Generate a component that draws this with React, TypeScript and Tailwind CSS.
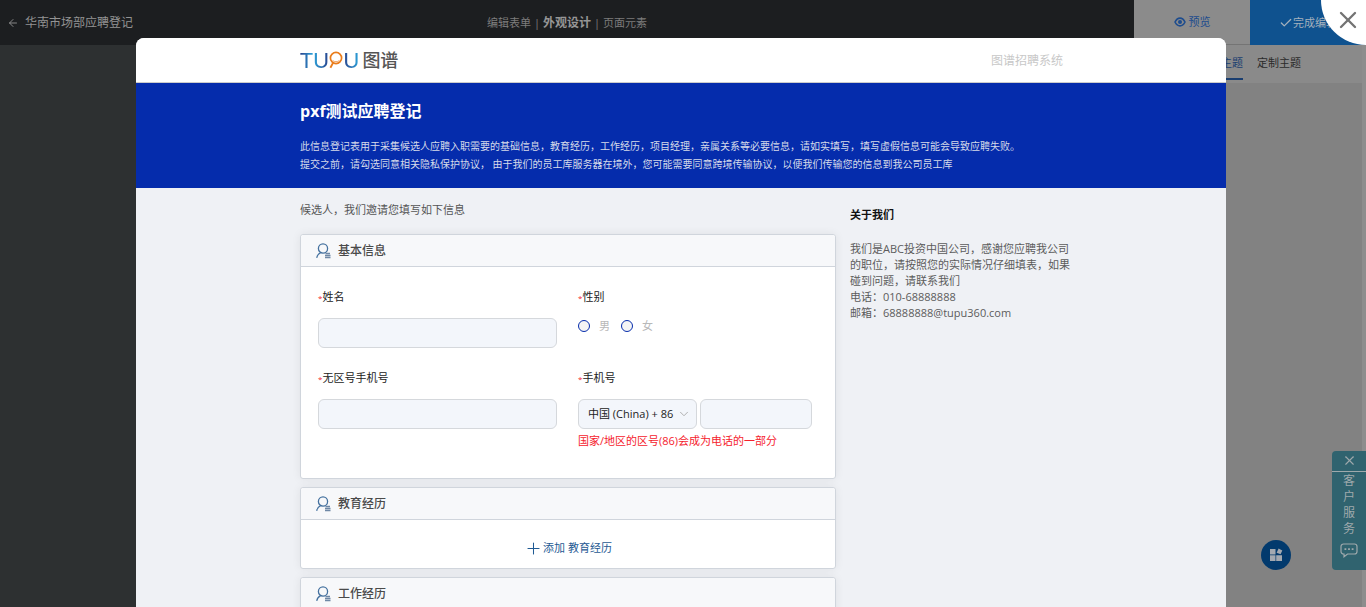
import React, { useState } from 'react';
import { Check, X, ArrowLeft, ChevronDown, Plus } from 'lucide-react';

const inputClass =
  'h-[30px] rounded-md border border-[#d5d8dc] bg-[#f3f6fb] px-2 text-[11px] text-[#333] outline-none focus:border-[#052cac]';

function SectionIcon() {
  return (
    <svg width="15" height="16" viewBox="0 0 15 16" fill="none" className="shrink-0">
      <circle cx="7" cy="5.5" r="4.6" stroke="#44719f" strokeWidth="1.3" />
      <path d="M4.6 9.6C2.6 10.6 1.2 12.2.7 14.8" stroke="#44719f" strokeWidth="1.2" />
      <path d="M9.5 10.5h4.5M9 12.5h5.5M9 14.5h5.5" stroke="#6f88a6" strokeWidth="1.3" />
    </svg>
  );
}

function EyeIcon() {
  return (
    <svg width="12" height="10" viewBox="0 0 12 10" fill="none">
      <path d="M1 5c1.3-2.6 3-3.9 5-3.9S9.7 2.4 11 5c-1.3 2.6-3 3.9-5 3.9S2.3 7.6 1 5z" stroke="currentColor" strokeWidth="1.6" />
      <circle cx="6" cy="5" r="2" fill="currentColor" />
    </svg>
  );
}

function Logo() {
  return (
    <div className="flex items-center font-['Lato','Noto_Sans_CJK_SC',sans-serif] text-[22px] leading-6">
      <span className="bg-linear-to-r from-[#27408b] to-[#2aa5dc] bg-clip-text text-transparent">T</span>
      <span className="bg-linear-to-r from-[#2aa5dc] to-[#27408b] bg-clip-text text-transparent">U</span>
      <svg width="14" height="18" viewBox="0 0 14 18" fill="none">
        <circle cx="7" cy="7" r="5.6" stroke="#ea7d1c" strokeWidth="1.7" />
        <path d="M4.2 11.6 1.4 16.8" stroke="#ea7d1c" strokeWidth="1.9" />
        <path d="M3.6 9.5c2 1.6 4.8 1.6 6.8 0" stroke="#f0a260" strokeWidth="1" />
      </svg>
      <span className="bg-linear-to-r from-[#27408b] to-[#2aa5dc] bg-clip-text text-transparent">U</span>
      <span className="ml-[3px] text-[18px] font-medium text-[#555]">图谱</span>
    </div>
  );
}

function Section({ title, children }: { title: string; children?: React.ReactNode }) {
  return (
    <section className="rounded-[3px] border border-[#d0d5dc] bg-white shadow-[0_0_10px_rgba(0,0,0,0.07)]">
      <h2 className="flex h-8 items-center gap-[7px] rounded-t-[3px] border-b border-[#d0d5dc] bg-[#f7f8fa] pl-[15px] text-[12px] font-medium text-[#4a4a4a]">
        <SectionIcon />
        {title}
      </h2>
      {children}
    </section>
  );
}

function Required() {
  return <span className="text-[8px] leading-none text-[#f5222d]">*</span>;
}

export default function App() {
  const [gender, setGender] = useState('');

  return (
    <div className="relative flex h-screen flex-col overflow-hidden bg-[#848484] font-['Open_Sans','Noto_Sans_CJK_SC',sans-serif] text-[11px] leading-[18px]">
      {/* editor behind the preview */}
      <header className="flex h-[45px] shrink-0">
        <div className="grid flex-1 grid-cols-[1fr_auto_1fr] items-center bg-[#1c1e20] text-[#7c7c7c]">
          <a href="#" className="flex items-center gap-[6px] pl-[7px] text-[12px] text-[#939393]">
            <ArrowLeft size={12} strokeWidth={1.8} />
            华南市场部应聘登记
          </a>
          <nav className="flex items-center gap-[3px]">
            <a href="#">编辑表单</a>
            <span>|</span>
            <a href="#" className="text-[12px] font-bold text-[#969696]">外观设计</a>
            <span>|</span>
            <a href="#">页面元素</a>
          </nav>
        </div>
        <button className="flex w-[116px] items-center justify-center gap-[3px] border-b border-[#747474] bg-[#8b8b8b] text-[#1d4c8e]">
          <EyeIcon />
          预览
        </button>
        <button className="flex w-[116px] items-center bg-[#0f528f] pl-[29px] text-[#a5b1bd]">
          <Check size={14} strokeWidth={2.2} />
          完成编辑
        </button>
      </header>

      <div className="flex flex-1">
        <div className="flex-1 bg-[#2d3031]" />
        <aside className="w-[232px] border-r-4 border-[#8d8d8d] bg-[#828282]">
          <div className="flex h-[38px] gap-[14px] bg-[#8a8a8a] pl-[65px] text-[#2b2b2b]">
            <a href="#" className="mb-[3px] border-b-2 border-[#1a3e70] pt-[9px] text-[#1a3e70]">系统主题</a>
            <a href="#" className="pt-[9px]">定制主题</a>
          </div>
        </aside>
      </div>

      <button aria-label="菜单" className="absolute right-[75px] bottom-[37px] flex size-[30px] items-center justify-center rounded-full bg-[#023a6d]">
        <svg width="14" height="14" viewBox="0 0 14 14" fill="#a3a9b0">
          <path d="M1 1h5.5v5.5H1zM1 7.2h5.5V13H1zM7.2 7.2H13V13H7.2z" />
          <path d="M9.6.6 13.3 2.4 11.6 6.3 7.6 4.7z" />
        </svg>
      </button>

      <div className="absolute right-0 bottom-[37px] flex h-[119px] w-[34px] flex-col items-center rounded-l bg-[#30636f] text-[#9fa9ac]">
        <button aria-label="关闭客服" className="flex h-[21px] w-full items-start justify-center border-b border-[#9fa9ac] pt-[2px]">
          <X size={15} strokeWidth={1.8} />
        </button>
        <a href="#" className="flex flex-col items-center pt-px text-[12px] leading-4">
          <span className="w-3">客户服务</span>
          <svg width="18" height="15" viewBox="0 0 18 15" fill="none" className="mt-[6px]">
            <path d="M3.5 1h11A2.5 2.5 0 0 1 17 3.5v5a2.5 2.5 0 0 1-2.5 2.5H7.5L4 13.8V11h-.5A2.5 2.5 0 0 1 1 8.5v-5A2.5 2.5 0 0 1 3.5 1z" stroke="currentColor" strokeWidth="1.2" />
            <path d="M4.5 5.2h1.8V7H4.5zM8.1 5.2h1.8V7H8.1zM11.7 5.2h1.8V7h-1.8z" fill="currentColor" />
          </svg>
        </a>
      </div>

      <button aria-label="关闭" className="absolute top-0 right-0 flex size-[45px] items-start justify-end rounded-bl-full bg-white pt-[6px] pr-1 text-[#737373]">
        <X size={28} strokeWidth={2} />
      </button>

      {/* preview window */}
      <div className="absolute top-[38px] right-[140px] bottom-0 left-[136px] overflow-hidden rounded-t-lg bg-[#eff1f5]">
        <div className="flex h-[45px] items-center justify-between border-b border-[#ccc] bg-white pr-[163px] pl-[164px]">
          <Logo />
          <span className="pt-[2px] text-[12px] text-[#c8c8c8]">图谱招聘系统</span>
        </div>

        <div className="bg-[#052cac] pt-4 pr-[160px] pb-[15px] pl-[164px]">
          <h1 className="text-[16px] leading-6 font-bold text-white">pxf测试应聘登记</h1>
          <p className="mt-[14px] text-[10px] text-[#d6dbea]">
            此信息登记表用于采集候选人应聘入职需要的基础信息，教育经历，工作经历，项目经理，亲属关系等必要信息，请如实填写，填写虚假信息可能会导致应聘失败。
            <br />
            提交之前，请勾选同意相关隐私保护协议， 由于我们的员工库服务器在境外，您可能需要同意跨境传输协议，以便我们传输您的信息到我公司员工库
          </p>
        </div>

        <div className="flex gap-[14px] pr-[160px] pl-[164px]">
          <form className="flex-1 pt-[13px]">
            <p className="mb-[15px] text-[#555]">候选人，我们邀请您填写如下信息</p>
            <div className="flex flex-col gap-2">
              <Section title="基本信息">
                <div className="grid grid-cols-2 gap-[21px] pt-[21px] pr-[18px] pb-[28px] pl-[17px] text-[#222]">
                  <div className="flex flex-col gap-3">
                    <label htmlFor="name"><Required />姓名</label>
                    <input id="name" className={inputClass} />
                  </div>

                  <fieldset>
                    <legend><Required />性别</legend>
                    <div className="mt-[11px] flex gap-[11px] text-[#b8b8b8]">
                      {['男', '女'].map((item) => (
                        <label key={item} className="flex items-center gap-[9px]">
                          <input
                            type="radio"
                            name="gender"
                            value={item}
                            checked={gender === item}
                            onChange={() => setGender(item)}
                            className="size-3 appearance-none rounded-full border border-[#052cac] bg-[#f5f5f5] checked:bg-[#052cac]"
                          />
                          {item}
                        </label>
                      ))}
                    </div>
                  </fieldset>

                  <div className="flex flex-col gap-3">
                    <label htmlFor="phone"><Required />无区号手机号</label>
                    <input id="phone" type="tel" className={inputClass} />
                  </div>

                  <div>
                    <label htmlFor="mobile" className="block"><Required />手机号</label>
                    <div className="mt-3 flex gap-[3px]">
                      <div className="relative">
                        <select
                          aria-label="区号"
                          className="h-[30px] w-[119px] appearance-none rounded-md border border-[#d5d8dc] bg-[#f3f6fb] pl-[9px] text-[11px] text-[#222] outline-none"
                        >
                          <option>中国 (China) + 86</option>
                        </select>
                        <ChevronDown size={14} strokeWidth={1.6} className="pointer-events-none absolute top-2 right-[6px] text-[#aaa]" />
                      </div>
                      <input id="mobile" type="tel" className={`${inputClass} w-[112px]`} />
                    </div>
                    <p className="mt-[3px] whitespace-nowrap text-[#f5222d]">国家/地区的区号(86)会成为电话的一部分</p>
                  </div>
                </div>
              </Section>

              <Section title="教育经历">
                <div className="flex h-12 items-center justify-center pt-2">
                  <button type="button" className="flex items-center text-[#1f5a93]">
                    <Plus size={19} strokeWidth={1.3} />
                    添加 教育经历
                  </button>
                </div>
              </Section>

              <Section title="工作经历">
                <div className="h-12" />
              </Section>
            </div>
          </form>

          <aside className="w-[216px] pt-[18px]">
            <h2 className="font-bold text-[#111]">关于我们</h2>
            <p className="mt-[17px] whitespace-nowrap leading-4 text-[#5c5c5c]">
              我们是ABC投资中国公司，感谢您应聘我公司
              <br />
              的职位，请按照您的实际情况仔细填表，如果
              <br />
              碰到问题，请联系我们
              <br />
              电话：010-68888888
              <br />
              邮箱：68888888@tupu360.com
            </p>
          </aside>
        </div>
      </div>
    </div>
  );
}
